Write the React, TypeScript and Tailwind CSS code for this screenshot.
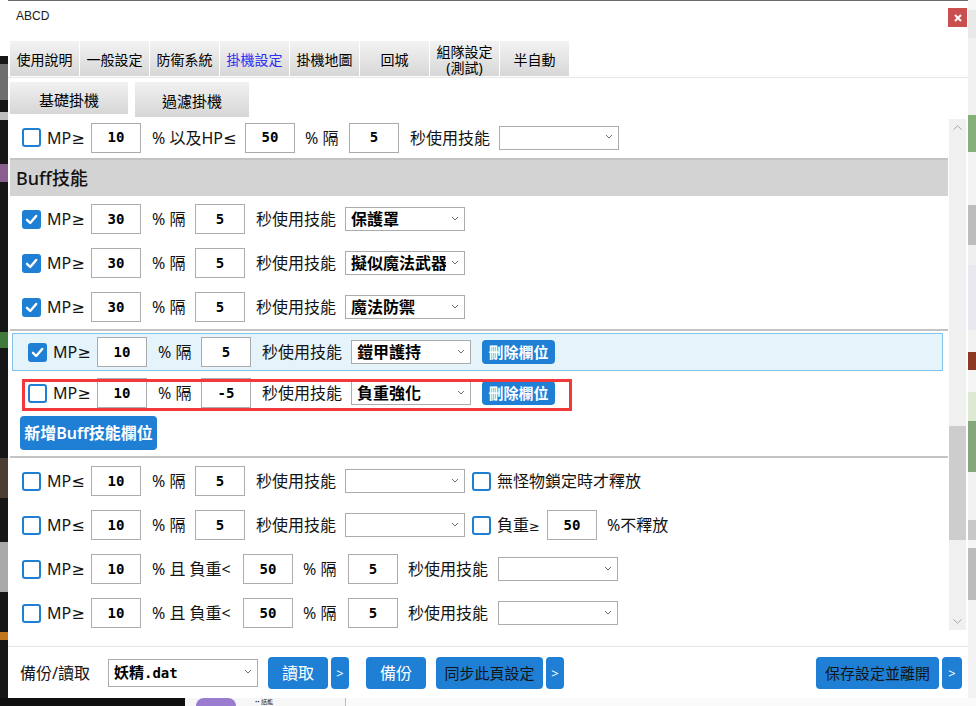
import React from "react";

const MONO = "font-['DejaVu_Sans_Mono',monospace] font-bold text-[14px] text-black";

function Cb({ on }: { on?: boolean }) {
  if (on) {
    return (
      <div className="w-[19px] h-[19px] rounded-[3px] bg-[#1e7fd4] flex items-center justify-center shrink-0">
        <svg width="15" height="15" viewBox="0 0 15 15">
          <path d="M3 7.8 L6.2 11 L12.2 4" stroke="white" strokeWidth="2.4" fill="none" strokeLinecap="round" strokeLinejoin="round" />
        </svg>
      </div>
    );
  }
  return <div className="w-[19px] h-[19px] rounded-[3px] border-2 border-[#1e7fd4] bg-white shrink-0" />;
}

function Inp({ v }: { v: string }) {
  return (
    <div className={`w-[50px] h-[30px] border border-[#ababab] bg-white flex items-center justify-center shrink-0 ${MONO}`}>
      {v}
    </div>
  );
}

function Chev() {
  return (
    <svg width="8" height="5" viewBox="0 0 8 5">
      <path d="M1 1 L4 4 L7 1" stroke="#707070" fill="none" strokeWidth="1" />
    </svg>
  );
}

function Sel({ t, c }: { t?: string; c?: string }) {
  return (
    <div className={`w-[120px] h-[24px] border border-[#ababab] bg-white flex items-center shrink-0 ${c ?? ""}`}>
      <span className="flex-1 pl-[5px] text-[16px] leading-[22px] font-semibold text-black whitespace-nowrap overflow-hidden">{t ?? ""}</span>
      <span className="w-[18px] flex items-center justify-center pb-[2px]">
        <Chev />
      </span>
    </div>
  );
}

function L({ c, children }: { c: string; children: React.ReactNode }) {
  return <div className={`shrink-0 whitespace-nowrap text-[16px] leading-[20px] text-[#141414] ${c}`}>{children}</div>;
}

function Btn({ c, children, dark }: { c: string; children: React.ReactNode; dark?: boolean }) {
  return (
    <div
      className={`shrink-0 bg-[#1e7fd4] rounded-[4px] flex items-center justify-center whitespace-nowrap ${dark ? "text-[#141414]" : "text-white"} ${c}`}
    >
      {children}
    </div>
  );
}

function Sep() {
  return <div className="h-[2px] w-[938px] bg-[#c3c3c3] shrink-0" />;
}

function BuffRow({ v, s }: { v: string; s: string }) {
  return (
    <div className="flex items-center h-[44px] shrink-0">
      <div className="ml-[12px]">
        <Cb on />
      </div>
      <L c="w-[50px] pl-[6px]">MP≥</L>
      <Inp v={v} />
      <L c="w-[54px] pl-[11px]">% 隔</L>
      <Inp v="5" />
      <L c="w-[100px] pl-[11px]">秒使用技能</L>
      <Sel t={s} />
    </div>
  );
}

function EditRow({ on, v2, s }: { on?: boolean; v2: string; s: string }) {
  return (
    <>
      <div className="ml-[15px]">
        <Cb on={on} />
      </div>
      <L c="w-[50px] pl-[6px]">MP≥</L>
      <Inp v="10" />
      <L c="w-[54px] pl-[11px]">% 隔</L>
      <Inp v={v2} />
      <L c="w-[100px] pl-[11px]">秒使用技能</L>
      <Sel t={s} />
      <Btn c="ml-[11px] w-[73px] h-[24px] text-[15px] font-semibold leading-[20px]">刪除欄位</Btn>
    </>
  );
}

function LowRowA({ sym, extra }: { sym: string; extra: React.ReactNode }) {
  return (
    <div className="flex items-center h-[44px] shrink-0">
      <div className="ml-[12px]">
        <Cb />
      </div>
      <L c="w-[50px] pl-[6px]">{`MP${sym}`}</L>
      <Inp v="10" />
      <L c="w-[54px] pl-[11px]">% 隔</L>
      <Inp v="5" />
      <L c="w-[100px] pl-[11px]">秒使用技能</L>
      <Sel />
      <div className="ml-[7px]">
        <Cb />
      </div>
      {extra}
    </div>
  );
}

function LowRowB() {
  return (
    <div className="flex items-center h-[44px] shrink-0">
      <div className="ml-[12px]">
        <Cb />
      </div>
      <L c="w-[50px] pl-[6px]">MP≥</L>
      <Inp v="10" />
      <L c="w-[102px] pl-[11px]">% 且 負重&lt;</L>
      <Inp v="50" />
      <L c="w-[55px] pl-[10px]">% 隔</L>
      <Inp v="5" />
      <L c="w-[100px] pl-[10px]">秒使用技能</L>
      <Sel />
    </div>
  );
}

const TABS = ["使用說明", "一般設定", "防衛系統", "掛機設定", "掛機地圖", "回城", "組隊設定\n(測試)", "半自動"];

function Dialog() {
  return (
    <div className="w-[960px] h-[698px] shrink-0 bg-white border-t border-[#6b6b6b] flex flex-col">
      {/* title bar */}
      <div className="h-[40px] flex items-start shrink-0">
        <div className="ml-[8px] mt-[7px] text-[12px] leading-[16px] text-[#1a1a1a] font-['Liberation_Sans',Arial,sans-serif]">ABCD</div>
        <div className="ml-auto mr-[1px] mt-[7px] w-[19px] h-[19px] bg-[#c9504e] flex items-center justify-center">
          <svg width="8" height="8" viewBox="0 0 8 8">
            <path d="M1 1 L7 7 M7 1 L1 7" stroke="white" strokeWidth="2" />
          </svg>
        </div>
      </div>
      {/* tabs */}
      <div className="h-[37px] shrink-0 border-b border-[#e8e8e8] flex items-start gap-[1px] pl-[2px]">
        {TABS.map((t) => (
          <div
            key={t}
            className={`w-[69px] h-[35px] bg-gradient-to-b from-[#f3f3f3] to-[#d7d7d7] flex items-center justify-center pt-[3px] text-center whitespace-pre-line text-[14px] leading-[16px] ${
              t === "掛機設定" ? "text-[#2e2ef2]" : "text-black"
            }`}
          >
            {t}
          </div>
        ))}
      </div>
      {/* subtabs */}
      <div className="h-[36px] mt-[4px] shrink-0 flex items-start pl-[2px]">
        <div className="w-[118px] h-[32px] bg-gradient-to-b from-[#f1f1f1] to-[#d6d6d6] flex items-center justify-center pt-[3px] text-[15px] leading-[18px] text-black">
          基礎掛機
        </div>
        <div className="ml-[7px] w-[114px] h-[35px] bg-gradient-to-b from-[#f1f1f1] to-[#d6d6d6] flex items-center justify-center pt-[3px] text-[15px] leading-[18px] text-black">
          過濾掛機
        </div>
      </div>
      {/* content */}
      <div className="h-[513px] shrink-0 flex items-start pl-[2px] overflow-hidden">
        <div className="w-[938px] h-[513px] overflow-hidden flex flex-col shrink-0">
          <div className="flex items-center h-[39px] shrink-0">
            <div className="ml-[12px]">
              <Cb />
            </div>
            <L c="w-[50px] pl-[6px]">MP≥</L>
            <Inp v="10" />
            <L c="w-[104px] pl-[11px]">% 以及HP≤</L>
            <Inp v="50" />
            <L c="w-[54px] pl-[10px]">% 隔</L>
            <Inp v="5" />
            <L c="w-[100px] pl-[11px]">秒使用技能</L>
            <Sel />
          </div>
          <div className="mt-[1px]">
            <Sep />
          </div>
          <div className="h-[36px] shrink-0 bg-[#d3d3d3] flex items-center pl-[6px] text-[18px] leading-[22px] font-medium text-[#111]">
            Buff技能
          </div>
          <div className="mt-[1px]" />
          <BuffRow v="30" s="保護罩" />
          <BuffRow v="30" s="擬似魔法武器" />
          <BuffRow v="30" s="魔法防禦" />
          <Sep />
          <div className="mt-[2px] ml-[2px] w-[931px] h-[38px] shrink-0 border border-[#85c2ec] bg-[#e5f3fb] flex items-center">
            <EditRow on v2="5" s="鎧甲護持" />
          </div>
          <div className="relative ml-[2px] w-[931px] h-[44px] shrink-0 border border-transparent flex items-center">
            <EditRow v2="-5" s="負重強化" />
            <div className="absolute left-[9px] top-[7px] w-[550px] h-[32px] border-[3px] border-[#f2383a]" />
          </div>
          <Btn c="mt-[1px] ml-[10px] w-[137px] h-[34px] text-[16px] font-semibold leading-[20px]">新增Buff技能欄位</Btn>
          <div className="mt-[6px]">
            <Sep />
          </div>
          <div className="mt-[1px]" />
          <LowRowA sym="≤" extra={<L c="pl-[6px] text-[15px]">無怪物鎖定時才釋放</L>} />
          <LowRowA
            sym="≤"
            extra={
              <>
                <L c="w-[56px] pl-[6px]">
                  負重<span className="text-[13px]">≥</span>
                </L>
                <Inp v="50" />
                <L c="pl-[10px]">%不釋放</L>
              </>
            }
          />
          <LowRowB />
          <LowRowB />
        </div>
        {/* scrollbar */}
        <div className="ml-[1px] mt-[1px] w-[17px] h-[511px] bg-[#f0f0f0] flex flex-col shrink-0">
          <div className="h-[17px] flex items-center justify-center">
            <svg width="9" height="5" viewBox="0 0 9 5">
              <path d="M0.5 4.5 L4.5 0.8 L8.5 4.5" stroke="#a6a6a6" fill="none" strokeWidth="1" />
            </svg>
          </div>
          <div className="h-[290px]" />
          <div className="h-[114px] bg-[#cdcdcd]" />
          <div className="flex-1" />
          <div className="h-[17px] flex items-center justify-center">
            <svg width="9" height="5" viewBox="0 0 9 5">
              <path d="M0.5 0.5 L4.5 4.2 L8.5 0.5" stroke="#a6a6a6" fill="none" strokeWidth="1" />
            </svg>
          </div>
        </div>
      </div>
      <div className="h-[15px] shrink-0" />
      {/* footer */}
      <div className="h-[52px] shrink-0 border-t border-[#e6e6e6] flex items-center pl-[2px]">
        <L c="w-[98px] pl-[10px] text-[16px]">備份/讀取</L>
        <div className="w-[150px] h-[28px] border border-[#ababab] bg-white flex items-center shrink-0">
          <span className="flex-1 pl-[5px] text-[15px] leading-[20px] font-bold text-black whitespace-nowrap">
            妖精<span className="font-['DejaVu_Sans_Mono',monospace] text-[14px]">.dat</span>
          </span>
          <span className="w-[18px] flex items-center justify-center pb-[2px]">
            <Chev />
          </span>
        </div>
        <Btn c="ml-[10px] w-[60px] h-[32px] text-[16px] leading-[20px]">讀取</Btn>
        <Btn c="ml-[3px] w-[18px] h-[32px] text-[13px] leading-[16px]">&gt;</Btn>
        <Btn c="ml-[17px] w-[60px] h-[32px] text-[16px] leading-[20px]">備份</Btn>
        <Btn dark c="ml-[10px] w-[107px] h-[32px] text-[15px] leading-[20px]">
          同步此頁設定
        </Btn>
        <Btn c="ml-[3px] w-[18px] h-[32px] text-[13px] leading-[16px]">&gt;</Btn>
        <div className="flex-1" />
        <Btn dark c="w-[123px] h-[32px] text-[15px] leading-[20px]">
          保存設定並離開
        </Btn>
        <Btn c="ml-[3px] mr-[6px] w-[20px] h-[32px] text-[13px] leading-[16px]">&gt;</Btn>
      </div>
    </div>
  );
}

function LeftStrip() {
  return (
    <div className="w-[8px] h-[698px] shrink-0 flex flex-col bg-[#161616]">
      <div className="h-[56px] bg-white" />
      <div className="h-[8px]" />
      <div className="h-[36px] bg-[#6e6e6e]" />
      <div className="h-[12px]" />
      <div className="h-[8px] bg-[#bdbdbd]" />
      <div className="h-[44px]" />
      <div className="h-[18px] bg-[#8a5f90]" />
      <div className="h-[150px]" />
      <div className="h-[16px] bg-[#3f7a3c]" />
      <div className="h-[110px]" />
      <div className="h-[40px] bg-[#4a3e34]" />
      <div className="h-[44px]" />
      <div className="h-[50px] bg-[#a8a8a8]" />
      <div className="h-[40px]" />
      <div className="h-[8px] bg-[#c0761c]" />
      <div className="flex-1" />
    </div>
  );
}

function RightStrip() {
  return (
    <div className="w-[8px] h-[698px] shrink-0 flex flex-col bg-[#f2f2f2]">
      <div className="h-[10px] bg-[#f7f7f7]" />
      <div className="h-[28px] bg-[#e9e9e9]" />
      <div className="h-[77px] bg-[#f0f0f0]" />
      <div className="h-[37px] bg-[#86b07a]" />
      <div className="h-[53px] bg-[#f3f3f3]" />
      <div className="h-[40px] bg-[#bdbdbd]" />
      <div className="h-[20px] bg-[#efefef]" />
      <div className="h-[65px] bg-[#e8e8f0]" />
      <div className="h-[22px] bg-[#f2f2f2]" />
      <div className="h-[18px] bg-[#8d3a24]" />
      <div className="h-[22px] bg-[#f5f5f5]" />
      <div className="h-[29px] bg-[#dde9d3]" />
      <div className="h-[51px] bg-[#86a77b]" />
      <div className="h-[48px] bg-[#f2f2f2]" />
      <div className="h-[20px] bg-[#c8c8c8]" />
      <div className="h-[8px] bg-[#f5f5f5]" />
      <div className="h-[52px] bg-[#bcbcbc]" />
      <div className="flex-1 bg-[#f3f3f3]" />
    </div>
  );
}

export default function App() {
  return (
    <div className="w-[976px] h-[706px] overflow-hidden flex flex-col bg-[#f5f5f5] font-['Noto_Sans','DejaVu_Sans','Noto_Sans_CJK_TC',sans-serif]">
      <div className="flex h-[698px] shrink-0">
        <LeftStrip />
        <Dialog />
        <RightStrip />
      </div>
      <div className="h-[8px] shrink-0 flex">
        <div className="w-[185px] bg-[#0f0f0f]" />
        <div className="w-[161px] h-[8px] bg-[#f7f7f7] flex items-center border-r border-[#bdbdbd]">
          <div className="ml-[11px] w-[40px] h-[8px] rounded-t-full bg-[#9a7cd0]" />
          <div className="ml-[19px] text-[6px] leading-[8px] text-[#222]">•• 詰能</div>
        </div>
        <div className="flex-1 bg-[#fafafa]" />
      </div>
    </div>
  );
}
